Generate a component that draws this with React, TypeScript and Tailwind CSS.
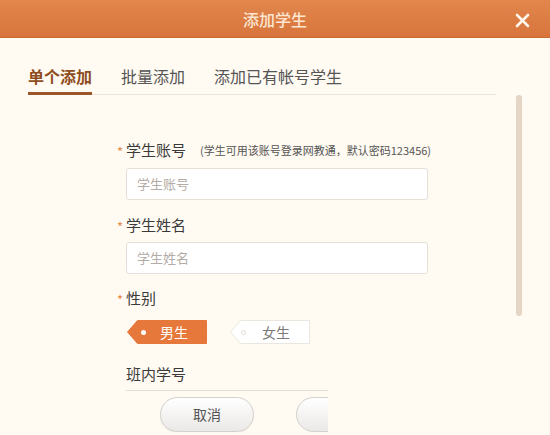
import React from "react";

const font = { fontFamily: '"Microsoft YaHei", "Noto Sans CJK SC", "Noto Sans", sans-serif' };

function Label({ text, required = true, hint }: { text: string; required?: boolean; hint?: string }) {
  return (
    <div className="flex h-5 items-center">
      <span className="w-[9px] pt-[2px] text-[13px] leading-none text-[#e58a4c]">{required ? "*" : ""}</span>
      <span className="text-[15px] leading-5 text-[#3a3a3a]">{text}</span>
      {hint && <span className="ml-[14px] text-[11px] leading-5 text-[#555]">{hint}</span>}
    </div>
  );
}

function Field({ placeholder }: { placeholder: string }) {
  return (
    <div className="ml-[9px] flex h-8 w-[302px] items-center rounded-[3px] border border-[#e6dfd8] bg-white px-[10px] text-[13px] text-[#b3aca6]">
      {placeholder}
    </div>
  );
}

function Tag({ label, active }: { label: string; active: boolean }) {
  return (
    <div className="relative flex h-6 w-[80px] items-center">
      <svg className="absolute inset-0" width="80" height="24" viewBox="0 0 80 24">
        <polygon
          points="0.5,12 10.5,0.5 79.5,0.5 79.5,23.5 10.5,23.5"
          fill={active ? "#e5783a" : "#ffffff"}
          stroke={active ? "#e5783a" : "#ece6e0"}
        />
      </svg>
      {active ? (
        <span className="relative ml-[14px] h-[5px] w-[5px] rounded-full bg-white" />
      ) : (
        <span className="relative ml-[11px] h-[5px] w-[5px] rounded-full border border-[#e0dad4]" />
      )}
      <span className={`relative ${active ? "ml-[14px] text-white" : "ml-[16px] text-[#7a7a7a]"} text-[14px] leading-none`}>
        {label}
      </span>
    </div>
  );
}

export default function App() {
  return (
    <div className="h-[435px] w-[550px] overflow-hidden bg-[#fffaf2]" style={font}>
      <header className="relative flex h-[38px] items-center justify-center border-b border-[#c96a33] bg-gradient-to-b from-[#e2874d] to-[#d7743b]">
        <span className="text-[16px] font-medium text-[#fce6d1]">添加学生</span>
        <svg className="absolute right-[20px] top-[13px]" width="15" height="15" viewBox="0 0 15 15">
          <path d="M2 2 L13 13 M13 2 L2 13" stroke="#fff6ee" strokeWidth="2.6" strokeLinecap="round" />
        </svg>
      </header>

      <div className="flex">
        <div className="flex-1">
          <nav className="ml-[28px] mr-[20px] mt-[26px] flex gap-[29px] border-b border-[#ede3d9]">
            <div className="-mb-px border-b-[3px] border-[#9a5528] pb-[3px] text-[16px] font-bold leading-6 text-[#8e4d20]">单个添加</div>
            <div className="pb-[6px] text-[16px] leading-6 text-[#555]">批量添加</div>
            <div className="pb-[6px] text-[16px] leading-6 text-[#555]">添加已有帐号学生</div>
          </nav>

          <div className="ml-[117px] mt-[45px] flex flex-col">
            <Label text="学生账号" hint="(学生可用该账号登录网教通，默认密码123456)" />
            <div className="mt-2">
              <Field placeholder="学生账号" />
            </div>
            <div className="mt-[15px]">
              <Label text="学生姓名" />
            </div>
            <div className="mt-[7px]">
              <Field placeholder="学生姓名" />
            </div>
            <div className="mt-[14px]">
              <Label text="性别" />
            </div>
            <div className="ml-[10px] mt-[12px] flex gap-[23px]">
              <Tag label="男生" active />
              <Tag label="女生" active={false} />
            </div>
            <div className="mt-[20px]">
              <Label text="班内学号" required={false} />
            </div>
            <div className="ml-[9px] mt-[6px] w-[202px] overflow-hidden">
              <div className="h-[7px] w-[302px] border-t border-[#e3dcd5]" />
              <div className="ml-[34px] flex gap-[42px]">
                <button className="h-[35px] w-[94px] shrink-0 rounded-full border border-[#d4d0cc] bg-gradient-to-b from-[#ffffff] to-[#ebe9e7] text-[14px] text-[#555] shadow-[0_1px_1px_rgba(0,0,0,0.08)]">
                  取消
                </button>
                <button className="h-[35px] w-[94px] shrink-0 rounded-full border border-[#d4d0cc] bg-gradient-to-b from-[#ffffff] to-[#ebe9e7]" aria-label="确定" />
              </div>
            </div>
          </div>
        </div>
        <div className="mr-[28px] mt-[57px] h-[221px] w-[6px] rounded-full bg-[#e5d5c5]" />
      </div>
    </div>
  );
}
